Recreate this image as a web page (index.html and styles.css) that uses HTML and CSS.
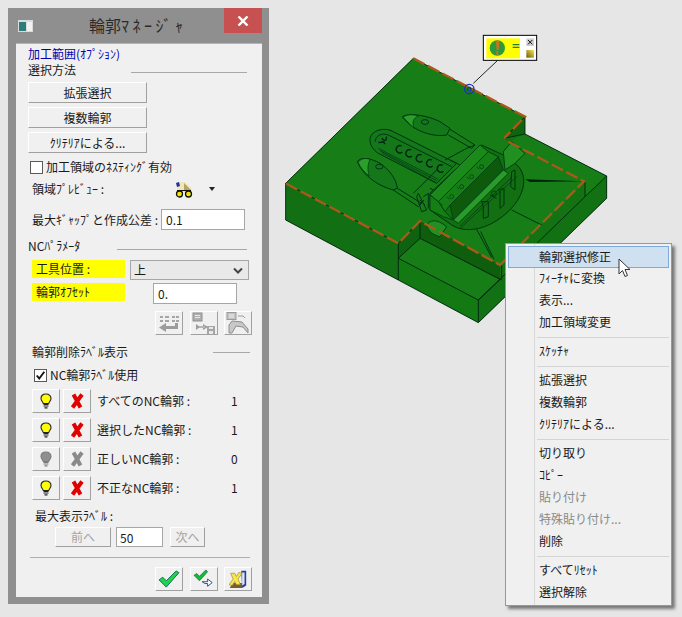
FILE: index.html
```html
<!doctype html>
<html lang="ja">
  <head>
    <meta charset="utf-8">
    <title>輪郭マネージャ</title>
    <link rel="stylesheet" href="styles.css">
  </head>
  <body>
    <svg class="defs" aria-hidden="true">
      <symbol id="bulb" viewBox="0 0 14 16">
        <path d="M7 1C3.800 1 2 3 2 5.500 2 7.500 3.600 8.600 4.300 10.500h5.400C10.400 8.600 12 7.500 12 5.500 12 3 10.200 1 7 1z" fill="currentColor" stroke="var(--line, #222)" stroke-width="1.100"/>
        <path d="M4.500 11.500h5M4.500 13h5M5.500 14.800h3" stroke="var(--line, #222)" stroke-width="1.200" fill="none"/>
      </symbol>
      <symbol id="cross" viewBox="0 0 14 16">
        <path d="M3.500 1.500L10.500 14.500M12 1.500L2.500 14.500" fill="none" stroke="currentColor" stroke-width="4"/>
      </symbol>
    </svg>

    <div class="window">
      <div class="titleBar">
        <svg class="appIcon" viewBox="0 0 15 12"><rect width="15" height="12" fill="#d8dcdc"/><rect x="1" y="2" width="7" height="9" fill="#2f7d78"/><rect x="9" y="2" width="5" height="9" fill="#f2f2f2"/></svg>
        <div class="titleText">輪郭<span class="kanaWide">ﾏﾈｰｼﾞｬ</span></div>
        <div class="closeBtn"><svg viewBox="0 0 12 10" width="12" height="10"><path d="M1.500 0.500l9 9M10.500 0.500l-9 9" stroke="#fff" stroke-width="2.400"/></svg></div>
      </div>

      <div class="panel">
        <div class="optLabel">加工範囲(ｵﾌﾟｼｮﾝ)</div>
        <div class="groupHead first"><span>選択方法</span><i class="rule ruleA"></i></div>
        <div class="wideBtn">拡張選択</div>
        <div class="wideBtn">複数輪郭</div>
        <div class="wideBtn">ｸﾘﾃﾘｱによる...</div>

        <div class="checkRow nest"><span class="checkBox"></span>加工領域のﾈｽﾃｨﾝｸﾞ有効</div>

        <div class="previewRow">
          <span class="previewLabel">領域ﾌﾟﾚﾋﾞｭｰ :</span>
          <svg class="glasses" viewBox="0 0 18 17" width="18" height="17">
            <path d="M2 1l8 0 7 7-1 3H2z" fill="#f0e7b8"/>
            <path d="M9 2l7 7H9z" fill="#b9a26a"/>
            <path d="M1 2l3-1 1 4-3 1z" fill="#23309a"/>
            <circle cx="4.500" cy="13" r="3" fill="#f4e600" stroke="#111" stroke-width="1.300"/>
            <circle cx="13.500" cy="13" r="3" fill="#f4e600" stroke="#111" stroke-width="1.300"/>
            <path d="M2 9.500h14" stroke="#111"/>
          </svg>
          <i class="caret"></i>
        </div>

        <div class="gapRow"><span>最大ｷﾞｬｯﾌﾟと作成公差 :</span><input class="field gapField" type="text" value="0.1"></div>

        <div class="groupHead nc"><span>NCﾊﾟﾗﾒｰﾀ</span><i class="rule ruleB"></i></div>

        <div class="paramRow toolRow">
          <span class="mark">工具位置 :</span>
          <div class="selectBox"><span>上</span><svg viewBox="0 0 10 7" width="10" height="7"><path d="M1 1.500l4 4 4-4" fill="none" stroke="#444" stroke-width="2"/></svg></div>
        </div>
        <div class="paramRow offsetRow">
          <span class="mark">輪郭ｵﾌｾｯﾄ</span>
          <input class="field offsetField" type="text" value="0.">
        </div>

        <div class="iconRow disabledIcons">
          <div class="iconBtn"><svg viewBox="0 0 22 20" width="22" height="20"><path d="M2 3h3v2H2zM7 3h4v2H7zM14 3h3v2h-3zM18 3h3v2h-3zM2 7h3v2H2zM7 7h4v2H7zM14 7h3v2h-3zM18 7h3v2h-3z" fill="#a5a5a5"/><path d="M20 10v6H8v3l-7-4.500L8 10v3h9v-3z" fill="#9c9c9c"/></svg></div>
          <div class="iconBtn"><svg viewBox="0 0 24 22" width="24" height="22"><rect x="1" y="1" width="9" height="8" fill="#b0b0b0" stroke="#8e8e8e"/><path d="M3 3.500h5M3 5.500h5" stroke="#e8e8e8"/><path d="M4 12l4 3-4 3zM16 15l-5-3v6z" fill="#9c9c9c"/><path d="M7 14h6v2H7z" fill="#b4b4b4"/><rect x="15" y="14" width="8" height="8" fill="#a5a5a5"/><rect x="17" y="15" width="4" height="2" fill="#e8e8e8"/><rect x="17" y="19" width="4" height="3" fill="#e8e8e8"/></svg></div>
          <div class="iconBtn"><svg viewBox="0 0 24 22" width="24" height="22"><rect x="1" y="0.500" width="9" height="7" fill="#c4c4c4" stroke="#9a9a9a"/><path d="M3 3h5M3 5h5" stroke="#eee"/><path d="M12 4h5l2 2" fill="none" stroke="#9a9a9a"/><path d="M3 21V13l3-4 10 1 6 7v4l-5-6-7-1-4 7z" fill="#c8c8c8" stroke="#8e8e8e"/></svg></div>
        </div>

        <div class="groupHead labels"><span>輪郭削除ﾗﾍﾞﾙ表示</span><i class="rule ruleC"></i></div>

        <div class="checkRow useLabel">
          <span class="checkBox"><svg viewBox="0 0 13 13" width="11" height="11"><path d="M2 6.500l3 3.500 6-8" fill="none" stroke="#111" stroke-width="2.200"/></svg></span>NC輪郭ﾗﾍﾞﾙ使用
        </div>

        <div class="labelRows">
          <div class="labelRow">
            <div class="iconBtn"><svg class="bulbOn" width="14" height="16"><use href="#bulb"/></svg></div>
            <div class="iconBtn"><svg class="crossOn" width="14" height="16"><use href="#cross"/></svg></div>
            <span class="labelName">すべてのNC輪郭 :</span><span class="labelCount">1</span>
          </div>
          <div class="labelRow">
            <div class="iconBtn"><svg class="bulbOn" width="14" height="16"><use href="#bulb"/></svg></div>
            <div class="iconBtn"><svg class="crossOn" width="14" height="16"><use href="#cross"/></svg></div>
            <span class="labelName">選択したNC輪郭 :</span><span class="labelCount">1</span>
          </div>
          <div class="labelRow">
            <div class="iconBtn"><svg class="bulbOff" width="14" height="16"><use href="#bulb"/></svg></div>
            <div class="iconBtn"><svg class="crossOff" width="14" height="16"><use href="#cross"/></svg></div>
            <span class="labelName">正しいNC輪郭 :</span><span class="labelCount">0</span>
          </div>
          <div class="labelRow">
            <div class="iconBtn"><svg class="bulbOn" width="14" height="16"><use href="#bulb"/></svg></div>
            <div class="iconBtn"><svg class="crossOn" width="14" height="16"><use href="#cross"/></svg></div>
            <span class="labelName">不正なNC輪郭 :</span><span class="labelCount">1</span>
          </div>
        </div>

        <div class="maxLabel">最大表示ﾗﾍﾞﾙ :</div>
        <div class="pagerRow">
          <div class="pagerBtn prevBtn">前へ</div>
          <input class="field pagerField" type="text" value="50">
          <div class="pagerBtn nextBtn">次へ</div>
        </div>

        <hr class="bottomRule">

        <div class="iconRow">
          <div class="iconBtn"><svg viewBox="0 0 24 20" width="22" height="18"><path d="M1 11l4-3 4 4L20 1l3 2L9 19z" fill="#1fd44a" stroke="#0b5f58" stroke-width="1"/></svg></div>
          <div class="iconBtn"><svg viewBox="0 0 24 22" width="22" height="20"><path d="M1 7l3-2 3 3 7-7 2 2L7 13z" fill="#17b93a" stroke="#0b5f3a" stroke-width=".7"/><path d="M10 14h6v-3l5 4-5 4v-3h-3z" fill="#fff" stroke="#1d3f9c"/></svg></div>
          <div class="iconBtn"><svg viewBox="0 0 22 22" width="18" height="18"><path d="M15 1h6v18l-5 3z" fill="#2a3f9c"/><path d="M16 3h3v14l-3 2z" fill="#dfe6f0"/><path d="M1 22l3-6h12v6z" fill="#7b5a3a"/><path d="M2 4h5l2 4 3-5 4 1-5 7 3 7h-5l-2-4-3 5-4-1 5-7z" fill="#f8e54a" stroke="#8a7a20" stroke-width=".7"/></svg></div>
        </div>
      </div>
    </div>

    <div class="stage">
      <svg class="model" viewBox="0 0 1020 930" width="340" height="310">
        <!-- slab sides -->
        <path d="M430 115L765 290V342L1010 468V535L625 908 47 600V490z" fill="#137313"/>
        <path d="M47 490L385 670V780L47 600z" fill="#136f13"/>
        <path d="M385 715L625 840V905L385 775z" fill="#137a13"/>
        <path d="M625 840L945 530 1010 468V535L625 908z" fill="#127112"/>
        <path d="M385 715L450 655 695 780 625 840z" fill="#177d17"/>
        <path d="M385 670L450 603V655L385 715z" fill="#0f620f"/>
        <path d="M450 603L690 735V780L450 655z" fill="#0e5e0e"/>
        <path d="M765 342L1010 468 945 530 945 485 715 365z" fill="#177d17"/>
        <path d="M765 290V342L702 355z" fill="#0f650f"/>
        <!-- top face -->
        <path class="face" d="M430 115L765 290 702 355 715 365 945 485 690 735 450 603 385 670 47 490z"/>

        <!-- pockets -->
        <path class="pocket" d="M397 290C415 278 470 285 510 305L540 325 530 345C490 352 430 335 397 290z"/>
        <path class="wall" d="M400 292C412 305 425 318 432 325 425 305 430 295 445 288 425 282 408 284 400 292z"/>
        <ellipse class="edge" cx="465" cy="306" rx="11" ry="7"/>
        <path class="edge" d="M540 328L615 375 605 385 535 345"/>
        <path class="pocket" d="M300 355C305 330 345 320 370 335L560 430 500 490 325 400C310 390 298 375 300 355z"/>
        <path class="edge" d="M315 365C318 345 335 338 355 345L545 440"/>
        <path class="edge thin" d="M325 385L505 478M330 392L500 482M335 398L498 488"/>
        <path class="pocket" d="M262 425C272 410 300 413 330 430 360 450 380 480 382 505L370 510C330 500 280 470 262 425z"/>
        <path class="wall" d="M265 428C272 445 285 458 298 468 290 445 295 430 300 418 285 413 270 416 265 428z"/>
        <ellipse class="edge" cx="328" cy="440" rx="11" ry="7"/>
        <path class="edge" d="M382 505L455 550 445 560 370 510"/>
        <path class="edge" d="M525 420L590 385 615 375M540 420L580 440 600 420M430 520L500 450M480 505L520 525"/>
        <g class="glyphs">
          <path d="M395 378a11 11 0 1 0 2 18M424 390a11 11 0 1 0 2 18M455 405a11 11 0 1 0 2 18M486 420a11 11 0 1 0 2 18M518 436a11 11 0 1 0 2 18"/>
          <path d="M335 355l10 8M350 350l-3 12M325 368l14-2M345 372l-6-8"/>
        </g>

        <!-- centre block -->
        <path d="M735 430C785 470 760 545 690 595 640 630 590 638 550 618L480 570 480 520 635 375 700 405z" fill="#127012" stroke="#031" stroke-width="3"/>
        <path d="M480 525L630 375 655 395 505 545z" fill="#1b8a1b" stroke="#041" stroke-width="3"/>
        <path d="M505 545L655 395 685 410 540 555 525 575z" fill="#168016" stroke="#041" stroke-width="3"/>
        <path d="M540 555L685 410 700 450 550 600z" fill="#0d5a0d" stroke="#041" stroke-width="3"/>
        <path d="M550 600L700 450 715 460 565 610z" fill="#2a9a2a" stroke="#041" stroke-width="3"/>
        <path d="M480 525L505 545 525 575 550 600 520 590 480 570z" fill="#148014" stroke="#041" stroke-width="3"/>
        <g class="edge thin">
          <circle cx="545" cy="530" r="6"/><circle cx="575" cy="500" r="6"/><circle cx="605" cy="470" r="6"/><circle cx="635" cy="440" r="6"/>
          <path d="M510 548l8 8M530 530l8 8M560 500l8 8M590 470l8 8M620 440l8 8"/>
        </g>
        <path class="edge" d="M640 560V595L655 590V545L635 545 640 560M690 515V565L702 555V505L685 510 690 515M660 525L680 535"/>
        <circle class="edge thin" cx="672" cy="520" r="7"/>
        <path class="edge" d="M725 455L735 450 735 510 722 500z"/>
        <path class="edge thin" d="M570 618L725 472M570 625L740 470"/>
        <path d="M700 395L725 365 765 400 735 430 705 450z" fill="#228f22" stroke="#041" stroke-width="3"/>
        <path d="M470 615C480 600 500 595 530 620L510 650C490 645 475 635 470 615z" fill="#228f22" stroke="#041" stroke-width="3"/>
        <path class="edge" d="M445 520L470 570 455 575 440 530zM460 530L475 520V565M450 540L465 555M448 555L462 540"/>

        <!-- construction lines -->
        <path d="M765 478L940 484 780 486z" fill="#021"/>
        <path class="edge" d="M725 570L815 615M620 628L665 712M632 635L672 718"/>

        <!-- outlines -->
        <path class="outline" d="M430 115L765 290V342L1010 468V535L625 908 47 600V490zM47 490L385 670V780M385 715L625 840V905M625 840L695 775V735M385 670L450 603V655L385 715M450 655L695 780M765 342L702 355M945 485V530L1010 468M625 840L945 530M702 355L765 290"/>

        <!-- contour dashes -->
        <path class="dash" d="M430 115L765 290 702 355 M715 365L942 484 690 735 450 603 385 670 47 490"/>

        <!-- callout -->
        <path d="M610 190L682 122" stroke="#000" stroke-width="2.500"/>
        <circle cx="598" cy="207" r="14" fill="none" stroke="#1c2fd0" stroke-width="4"/>
        <circle cx="598" cy="207" r="6" fill="none" stroke="#1c2fd0" stroke-width="3"/>
        <rect x="640" y="46" width="160" height="75" fill="#fff" stroke="#000" stroke-width="3"/>
        <rect x="649" y="55" width="101" height="60" fill="#ff0"/>
        <circle cx="682" cy="84" r="23" fill="#2a9a3a"/>
        <path d="M678 62h10l-2 28h-6zM679 94h6v10h-6z" fill="#d8701a"/>
        <path d="M728 72h20v4h-20zM728 80h20v4h-20z" fill="#2a7a2a"/>
        <rect x="769" y="55" width="23" height="23" fill="#cfcfcf"/>
        <path d="M774 60l13 13M787 60l-13 13" stroke="#111" stroke-width="3"/>
        <rect x="769" y="90" width="23" height="23" fill="url(#goldFade)"/>
        <defs>
          <linearGradient id="goldFade" x1="1" y1="0" x2="0" y2="1">
            <stop offset="0" stop-color="#ffe94a"/>
            <stop offset="1" stop-color="#6a5a10"/>
          </linearGradient>
        </defs>
      </svg>

      <div class="menu">
        <div class="menuItem active">輪郭選択修正</div>
        <div class="menuItem">ﾌｨｰﾁｬに変換</div>
        <div class="menuItem">表示...</div>
        <div class="menuItem">加工領域変更</div>
        <div class="menuSep"></div>
        <div class="menuItem">ｽｹｯﾁｬ</div>
        <div class="menuSep"></div>
        <div class="menuItem">拡張選択</div>
        <div class="menuItem">複数輪郭</div>
        <div class="menuItem">ｸﾘﾃﾘｱによる...</div>
        <div class="menuSep"></div>
        <div class="menuItem">切り取り</div>
        <div class="menuItem">ｺﾋﾟｰ</div>
        <div class="menuItem off">貼り付け</div>
        <div class="menuItem off">特殊貼り付け...</div>
        <div class="menuItem">削除</div>
        <div class="menuSep"></div>
        <div class="menuItem">すべてﾘｾｯﾄ</div>
        <div class="menuItem">選択解除</div>
      </div>

      <svg class="pointer" viewBox="0 0 13 20" width="13" height="20"><path d="M1 1v15l3.500-3.500 2.500 6 2.500-1-2.500-6h5z" fill="#fff" stroke="#333"/></svg>
    </div>
  </body>
</html>
```

FILE: styles.css
```css
html, body {
  margin:           0;
  height:           100%;
}
body {
  display:          flex;
  align-items:      flex-start;
  padding:          8px 0 0 8px;
  box-sizing:       border-box;
  overflow:         hidden;
  background-color: #e6e6e6;
  color:            #1a1a1a;
  font-family:      "Noto Sans CJK JP", "Liberation Sans", sans-serif;
  font-size:        12px;
  line-height:      14px;
}
.defs {
  position:         absolute;
  width:            0;
  height:           0;
}

/* dialog */
.window {
  flex:             none;
  width:            261px;
  height:           596px;
  display:          flex;
  flex-direction:   column;
  background-color: #8f8f8f;
}
.titleBar {
  flex:             none;
  height:           35px;
  display:          flex;
  align-items:      flex-start;
  padding-right:    7px;
}
.appIcon {
  width:            15px;
  height:           12px;
  margin:           12px 0 0 10px;
}
.titleText {
  flex:             1;
  padding:          5px 0 0 56px;
  font-size:        16px;
  line-height:      24px;
  color:            #2b2b2b;
}
.kanaWide {
  letter-spacing:   3.500px;
}
.closeBtn {
  width:            38px;
  height:           25px;
  display:          flex;
  align-items:      center;
  justify-content:  center;
  background-color: #c75050;
}
.panel {
  flex:             1;
  margin:           0 7px 7px 8px;
  padding:          3px 12px 0;
  background-color: #f0f0f0;
  border:           1px solid #b4b4b4;
  border-width:     1px 0 0;
}
.optLabel {
  color:            #0000b0;
  height:           14px;
}
.groupHead {
  display:          flex;
  align-items:      center;
  height:           16px;
}
.rule {
  height:           1px;
  background-color: #a8a8a8;
}
.ruleA {
  width:            116px;
  margin:           4px 3px 0 auto;
}
.ruleB {
  width:            130px;
  margin:           6px 3px 0 auto;
}
.ruleC {
  width:            37px;
  margin:           0 0 0 auto;
}
.first {
  margin-top:       1px;
}
.nc {
  margin-top:       8px;
}
.labels {
  margin:           9px 0 0 4px;
}
.wideBtn, .iconBtn, .pagerBtn {
  display:          flex;
  align-items:      center;
  justify-content:  center;
  box-sizing:       border-box;
  background-color: #f0f0f0;
  border:           1px solid;
  border-color:     #fff #a0a0a0 #a0a0a0 #fff;
}
.wideBtn {
  width:            119px;
  height:           21px;
  margin-top:       4px;
}
.checkRow {
  display:          flex;
  align-items:      center;
  gap:              3px;
  height:           14px;
}
.nest {
  margin:           7px 0 0 2px;
}
.useLabel {
  margin:           8px 0 0 6px;
}
.checkBox {
  width:            11px;
  height:           11px;
  display:          flex;
  background:       #fff;
  border:           1px solid #5a5a5a;
}
.previewRow {
  display:          flex;
  align-items:      center;
  height:           18px;
  margin:           6px 0 0 4px;
}
.previewLabel {
  width:            143px;
}
.caret {
  margin-left:      16px;
  border:           3px solid transparent;
  border-top:       4px solid #222;
  border-bottom:    0;
}
.gapRow {
  display:          flex;
  align-items:      center;
  justify-content:  space-between;
  width:            213px;
  margin:           11px 0 0 4px;
}
.field {
  box-sizing:       border-box;
  height:           21px;
  padding:          0 4px;
  background:       #fff;
  border:           1px solid #a6a6a6;
  border-radius:    0;
  outline:          none;
  color:            #1a1a1a;
  font-family:      inherit;
  font-size:        12px;
}
.gapField {
  width:            84px;
}
.paramRow {
  display:          flex;
  align-items:      flex-start;
  margin-left:      4px;
}
.toolRow {
  margin-top:       6px;
  height:           21px;
}
.offsetRow {
  margin-top:       2px;
  height:           21px;
}
.mark {
  width:            89px;
  height:           18px;
  padding-left:     4px;
  background-color: #ffff00;
  line-height:      17px;
}
.selectBox {
  box-sizing:       border-box;
  width:            119px;
  height:           20px;
  margin-left:      5px;
  padding:          0 5px 0 3px;
  display:          flex;
  align-items:      center;
  justify-content:  space-between;
  background-color: #e9e9e9;
  border:           1px solid #a6a6a6;
}
.offsetField {
  width:            84px;
  margin-left:      28px;
}
.iconRow {
  display:          flex;
  justify-content:  flex-end;
  gap:              7px;
  margin-right:     -2px;
}
.iconRow .iconBtn:last-child {
  margin-left:      -1px;
}
.disabledIcons {
  margin-top:       7px;
}
.iconBtn {
  width:            28px;
  height:           24px;
}
.labelRows {
  display:          flex;
  flex-direction:   column;
  gap:              5px;
  margin:           7px 0 0 4px;
}
.labelRow {
  display:          flex;
  align-items:      center;
  gap:              3px;
}
.labelName {
  width:            131px;
  margin-left:      3px;
}
.bulbOn {
  color:            #ffff00;
}
.bulbOff {
  color:            #8f8f8f;
  --line:           #7a7a7a;
}
.crossOn {
  color:            #e00000;
}
.crossOff {
  color:            #8a8a8a;
}
.maxLabel {
  margin:           9px 0 0 7px;
}
.pagerRow {
  display:          flex;
  margin:           4px 0 0 27px;
}
.pagerBtn {
  height:           20px;
  color:            #a3a3a3;
}
.prevBtn {
  width:            56px;
}
.nextBtn {
  width:            35px;
  margin-left:      7px;
}
.pagerField {
  width:            47px;
  height:           20px;
  margin-left:      5px;
  padding:          0 3px;
}
.bottomRule {
  height:           1px;
  margin:           10px 0 9px 2px;
  border:           0;
  background-color: #b0b0b0;
}

/* model */
.stage {
  flex:             1;
  position:         relative;
  align-self:       stretch;
}
.model {
  position:         absolute;
  left:             1px;
  top:              12px;
}
.face {
  fill:             #177d17;
}
.pocket {
  fill:             #14771a;
  stroke:           #031;
  stroke-width:     3;
}
.wall {
  fill:             #2aa02a;
  stroke:           #031;
  stroke-width:     2;
}
.edge {
  fill:             none;
  stroke:           #031;
  stroke-width:     3;
}
.thin {
  stroke-width:     2;
}
.glyphs {
  fill:             none;
  stroke:           #021;
  stroke-width:     4;
}
.outline {
  fill:             none;
  stroke:           #021;
  stroke-width:     2.600;
}
.dash {
  fill:             none;
  stroke:           #a9591a;
  stroke-width:     7;
  stroke-dasharray: 38 11;
}

/* context menu */
.menu {
  position:         absolute;
  left:             236px;
  top:              235px;
  box-sizing:       border-box;
  width:            167px;
  height:           363px;
  padding:          2px;
  background:       linear-gradient(to right, #f0f0f0 28px, #d8d8d8 28px, #d8d8d8 29px, #f0f0f0 29px);
  border:           1px solid #979797;
  box-shadow:       3px 3px 3px #777;
  font-size:        12px;
}
.menuItem {
  height:           22px;
  padding-left:     31px;
  line-height:      20px;
  box-sizing:       border-box;
}
.menuItem.active {
  background-color: #cfe0f0;
  border:           1px solid #7ea9d8;
  padding-left:     30px;
  line-height:      19px;
}
.menuItem.off {
  color:            #8a8a8a;
}
.menuSep {
  height:           1px;
  margin:           3px 0 3px 29px;
  background-color: #d4d4d4;
}
.pointer {
  position:         absolute;
  left:             349px;
  top:              250px;
}
```
